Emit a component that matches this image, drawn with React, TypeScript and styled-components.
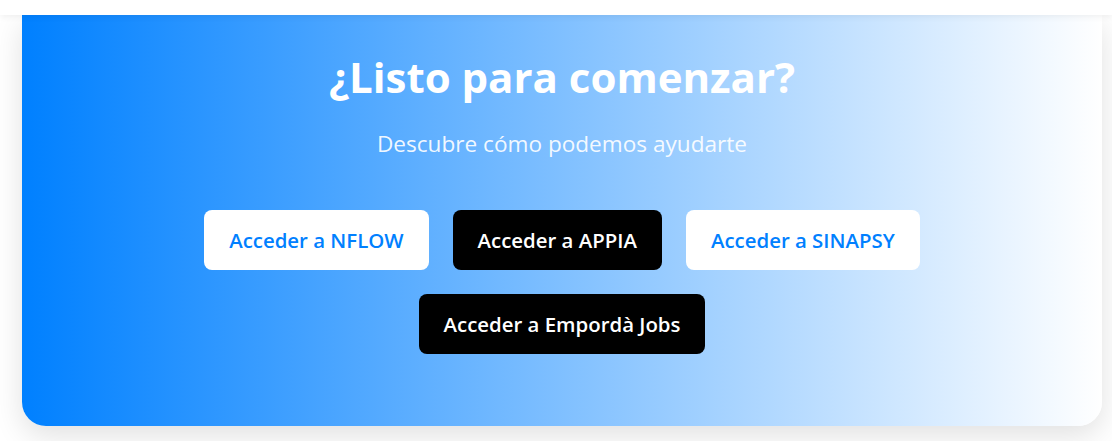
import React from "react";
import styled, { createGlobalStyle } from "styled-components";

const GlobalStyle = createGlobalStyle`
  * { box-sizing: border-box; }
  html, body { margin: 0; padding: 0; background: #ffffff; }
  body { font-family: "Open Sans", "Noto Sans", sans-serif; }
`;

const Page = styled.div`
  width: 1112px;
  height: 441px;
  overflow: hidden;
  background: #ffffff;
  display: flex;
  flex-direction: column;
`;

const TopBar = styled.header`
  position: relative;
  z-index: 2;
  height: 15px;
  flex: none;
  background: #ffffff;
  box-shadow: 0 2px 6px rgba(0, 0, 0, 0.06);
`;

const Card = styled.section`
  margin-left: 22px;
  width: 1080px;
  height: 411px;
  flex: none;
  background: linear-gradient(to right, #0080ff 0%, #ffffff 100%);
  border-radius: 0 0 24px 24px;
  box-shadow: 0 10px 30px rgba(0, 0, 0, 0.12);
  display: flex;
  flex-direction: column;
  align-items: center;
  padding-top: 37px;
  color: #ffffff;
`;

const Title = styled.h2`
  margin: 0;
  font-size: 42px;
  line-height: 50px;
  font-weight: 700;
  color: #ffffff;
`;

const Subtitle = styled.p`
  margin: 26px 0 0;
  font-size: 22.6px;
  line-height: 32px;
  font-weight: 400;
  color: rgba(255, 255, 255, 0.92);
`;

const Buttons = styled.div`
  margin-top: 50px;
  display: flex;
  flex-wrap: wrap;
  justify-content: center;
  gap: 24px;
  max-width: 760px;
`;

const Button = styled.a<{ $dark?: boolean }>`
  height: 60px;
  padding: 0 25px;
  display: inline-flex;
  align-items: center;
  justify-content: center;
  border-radius: 8px;
  font-size: 20.4px;
  font-weight: 600;
  text-decoration: none;
  cursor: pointer;
  background: ${(p) => (p.$dark ? "#000000" : "#ffffff")};
  color: ${(p) => (p.$dark ? "#ffffff" : "#0080ff")};
`;

export default function App() {
  return (
    <>
      <GlobalStyle />
      <Page>
        <TopBar />
        <Card>
          <Title>¿Listo para comenzar?</Title>
          <Subtitle>Descubre cómo podemos ayudarte</Subtitle>
          <Buttons>
            <Button>Acceder a NFLOW</Button>
            <Button $dark>Acceder a APPIA</Button>
            <Button>Acceder a SINAPSY</Button>
            <Button $dark>Acceder a Empordà Jobs</Button>
          </Buttons>
        </Card>
      </Page>
    </>
  );
}
